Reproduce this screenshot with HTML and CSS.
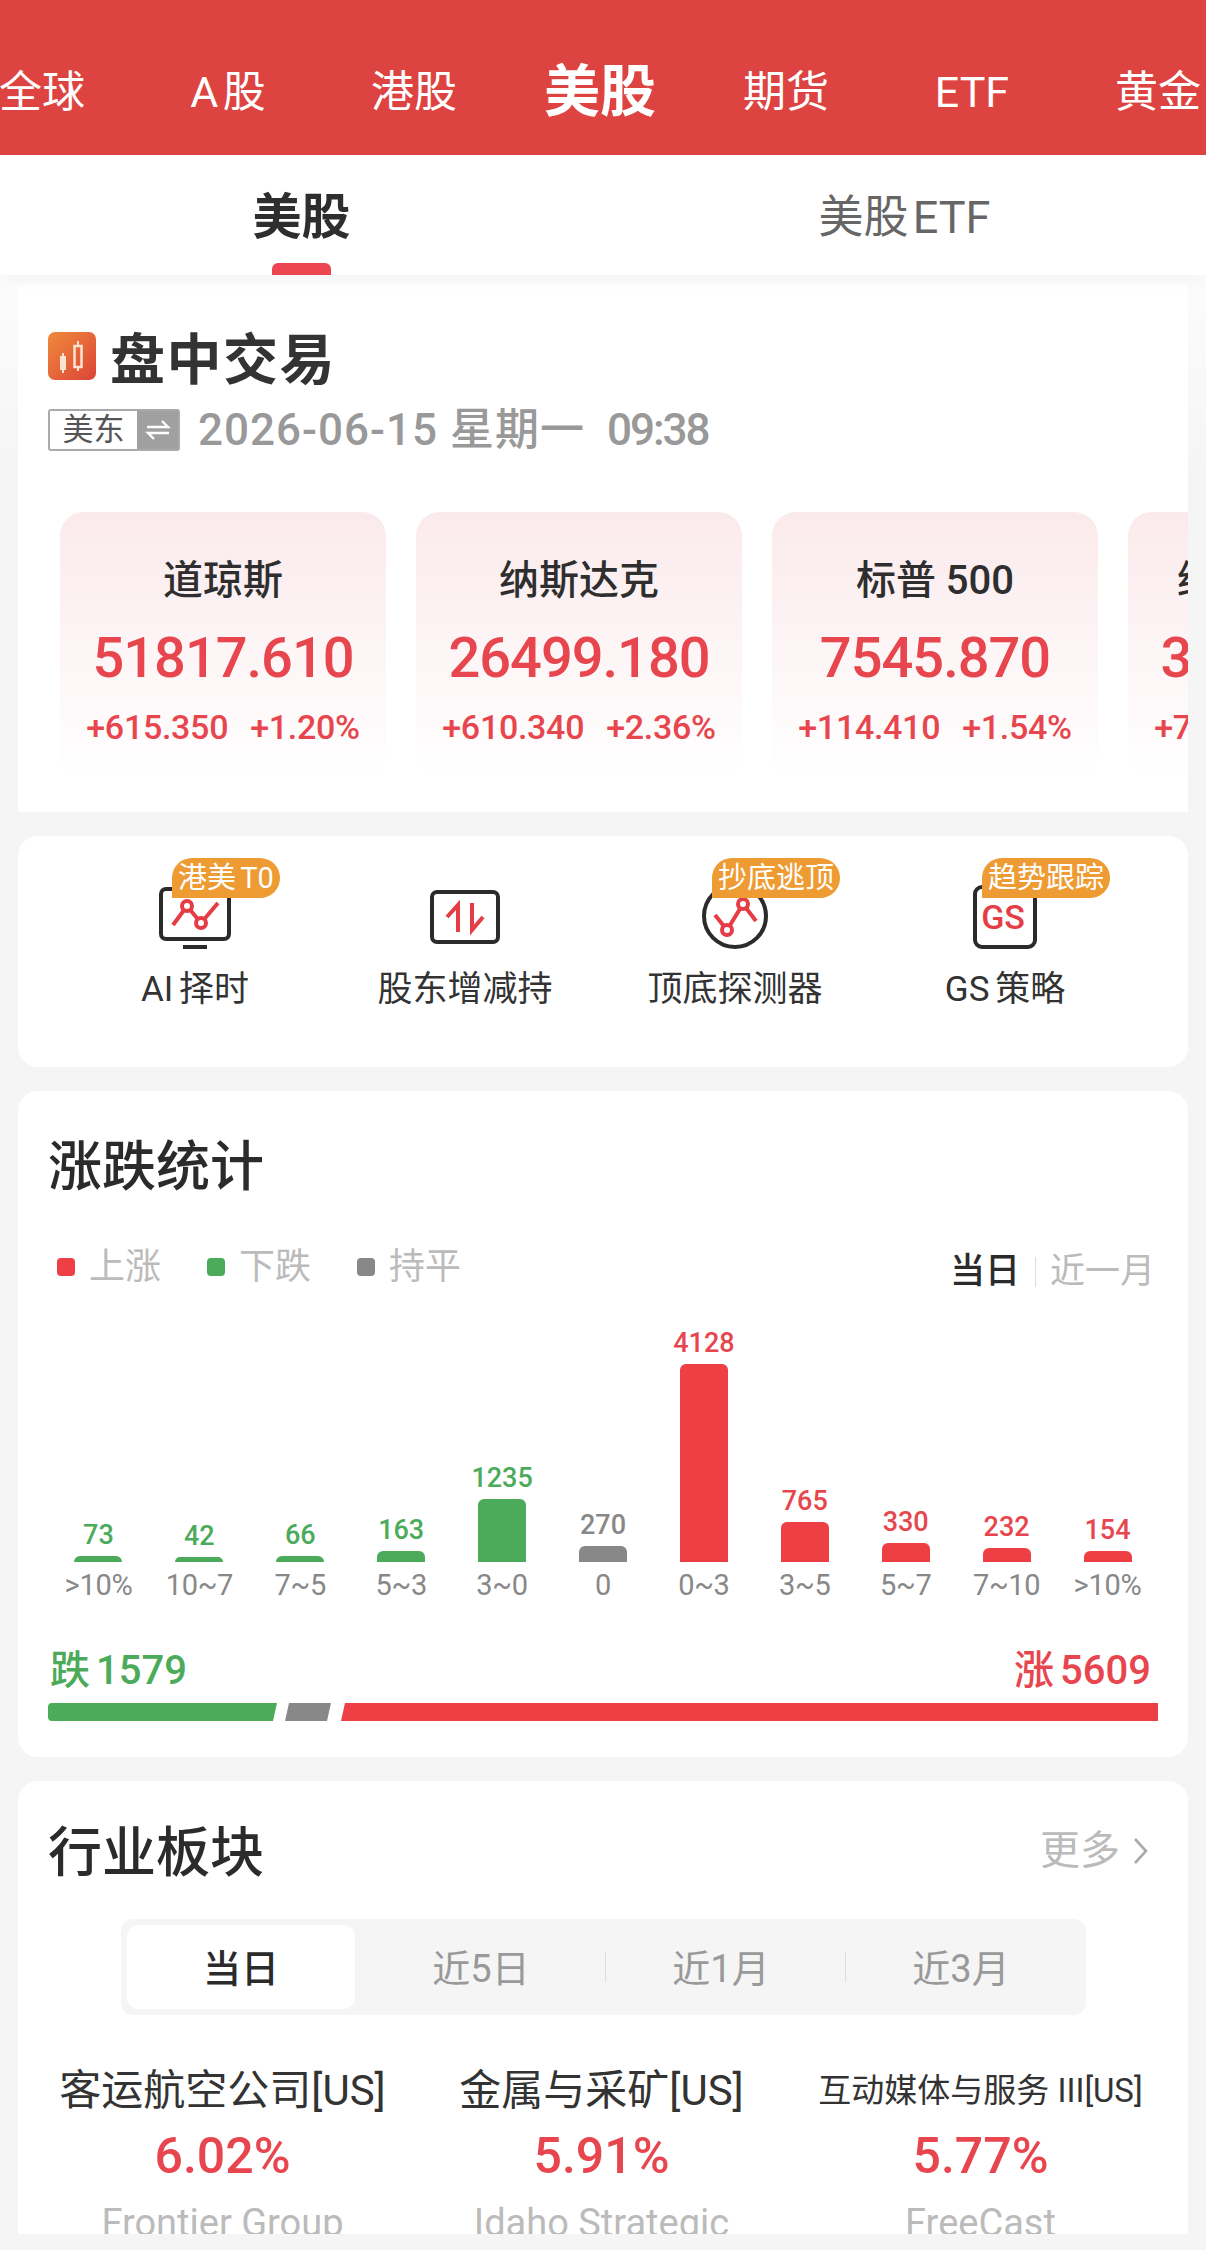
FILE: index.html
```html
<!DOCTYPE html>
<html lang="zh-CN">
<head>
    <meta charset="UTF-8">
    <meta name="viewport" content="width=device-width, initial-scale=1.0">
    <title>美股</title>
    <link rel="stylesheet" href="styles.css">
</head>
<body>

    <nav class="top-nav">
        <a>全球</a>
        <a>A 股</a>
        <a>港股</a>
        <a class="active">美股</a>
        <a>期货</a>
        <a>ETF</a>
        <a>黄金</a>
    </nav>

    <div class="sub-tabs">
        <a class="sub-tab active">美股</a>
        <a class="sub-tab">美股 ETF</a>
    </div>

    <main class="page">

        <!-- Session and index cards -->
        <section class="card session">
            <div class="session-title">
                <svg class="session-icon" viewBox="0 0 48 48">
                    <defs>
                        <linearGradient id="sessionGrad" x1="0" y1="0" x2="1" y2="1">
                            <stop offset="0" stop-color="#ef8a3c"/>
                            <stop offset="1" stop-color="#dc4438"/>
                        </linearGradient>
                    </defs>
                    <rect width="48" height="48" rx="7" fill="url(#sessionGrad)"/>
                    <path d="M15 21v3M15 38v3M30 9v4M30 35v4" stroke="#fbe3d2" stroke-width="2"/>
                    <rect x="12" y="24" width="6" height="14" fill="#fbe3d2"/>
                    <rect x="26.5" y="14" width="7" height="21" fill="none" stroke="#fbe3d2" stroke-width="2.5"/>
                </svg>
                <h2>盘中交易</h2>
            </div>
            <div class="session-date">
                <span class="zone">
                    <span class="zone-name">美东</span>
                    <span class="zone-switch">
                        <svg viewBox="0 0 26 22" width="26" height="22">
                            <path d="M2 8h21l-6-6M24 14H3l6 6" fill="none" stroke="#fff" stroke-width="2.4"/>
                        </svg>
                    </span>
                </span>
                <span class="date-text">2026-06-15 星期一</span>
                <span class="date-time">09:38</span>
            </div>
            <div class="index-strip">
                <div class="index-card">
                    <div class="index-name">道琼斯</div>
                    <div class="index-value">51817.610</div>
                    <div class="index-change"><span>+615.350</span><span>+1.20%</span></div>
                </div>
                <div class="index-card">
                    <div class="index-name">纳斯达克</div>
                    <div class="index-value">26499.180</div>
                    <div class="index-change"><span>+610.340</span><span>+2.36%</span></div>
                </div>
                <div class="index-card">
                    <div class="index-name">标普 500</div>
                    <div class="index-value">7545.870</div>
                    <div class="index-change"><span>+114.410</span><span>+1.54%</span></div>
                </div>
                <div class="index-card">
                    <div class="index-name">纳斯达克100</div>
                    <div class="index-value">30412.650</div>
                    <div class="index-change"><span>+720.350</span><span>+2.42%</span></div>
                </div>
            </div>
        </section>

        <!-- Tool shortcuts -->
        <section class="card menu">
            <div class="menu-item">
                <div class="menu-icon">
                    <svg viewBox="0 0 160 92" width="160" height="92">
                        <rect x="46" y="31" width="68" height="50" rx="5" class="ink"/>
                        <path d="M68 89h24" class="ink"/>
                        <path d="M58 67l14-19 14 17 17-20" class="pen"/>
                        <circle cx="72" cy="48" r="5" class="dot"/>
                        <circle cx="86" cy="65" r="5" class="dot"/>
                    </svg>
                    <span class="menu-badge">港美 T0</span>
                </div>
                <div class="menu-label">AI 择时</div>
            </div>
            <div class="menu-item">
                <div class="menu-icon">
                    <svg viewBox="0 0 160 92" width="160" height="92">
                        <rect x="47" y="34" width="66" height="50" rx="5" class="ink"/>
                        <path d="M62 59l11-12v27M98 59L87 72V45" class="pen"/>
                    </svg>
                </div>
                <div class="menu-label">股东增减持</div>
            </div>
            <div class="menu-item">
                <div class="menu-icon">
                    <svg viewBox="0 0 160 92" width="160" height="92">
                        <circle cx="80" cy="58" r="31" class="ink"/>
                        <path d="M60 57l12 15 16-26 13 17" class="pen"/>
                        <circle cx="72" cy="72" r="5" class="dot"/>
                        <circle cx="88" cy="46" r="5" class="dot"/>
                    </svg>
                    <span class="menu-badge">抄底逃顶</span>
                </div>
                <div class="menu-label">顶底探测器</div>
            </div>
            <div class="menu-item">
                <div class="menu-icon">
                    <svg viewBox="0 0 160 92" width="160" height="92">
                        <rect x="50" y="29" width="60" height="60" rx="7" class="ink"/>
                        <text x="78" y="71" text-anchor="middle" class="gs-text">GS</text>
                    </svg>
                    <span class="menu-badge">趋势跟踪</span>
                </div>
                <div class="menu-label">GS 策略</div>
            </div>
        </section>

        <!-- Rise and fall distribution -->
        <section class="card stats">
            <h2 class="card-title">涨跌统计</h2>
            <div class="stats-head">
                <div class="legend">
                    <span class="legend-item"><i class="bg-red"></i>上涨</span>
                    <span class="legend-item"><i class="bg-green"></i>下跌</span>
                    <span class="legend-item"><i class="bg-grey"></i>持平</span>
                </div>
                <div class="range">
                    <span class="range-on">当日</span>
                    <span class="range-off">近一月</span>
                </div>
            </div>
            <div class="chart">
                <div class="col green"><span class="num">73</span><i style="height:6px"></i></div>
                <div class="col green"><span class="num">42</span><i style="height:5px"></i></div>
                <div class="col green"><span class="num">66</span><i style="height:6px"></i></div>
                <div class="col green"><span class="num">163</span><i style="height:11px"></i></div>
                <div class="col green"><span class="num">1235</span><i style="height:63px"></i></div>
                <div class="col grey"><span class="num">270</span><i style="height:16px"></i></div>
                <div class="col red"><span class="num">4128</span><i style="height:198px"></i></div>
                <div class="col red"><span class="num">765</span><i style="height:40px"></i></div>
                <div class="col red"><span class="num">330</span><i style="height:19px"></i></div>
                <div class="col red"><span class="num">232</span><i style="height:14px"></i></div>
                <div class="col red"><span class="num">154</span><i style="height:11px"></i></div>
            </div>
            <div class="axis">
                <span>&gt;10%</span><span>10~7</span><span>7~5</span><span>5~3</span><span>3~0</span><span>0</span>
                <span>0~3</span><span>3~5</span><span>5~7</span><span>7~10</span><span>&gt;10%</span>
            </div>
            <div class="totals">
                <span class="total-down">跌 1579</span>
                <span class="total-up">涨 5609</span>
            </div>
            <div class="split">
                <span class="split-down" style="width:229px"></span>
                <span class="split-flat" style="width:46px"></span>
                <span class="split-up"></span>
            </div>
        </section>

        <!-- Sectors -->
        <section class="card sectors">
            <div class="sectors-head">
                <h2 class="card-title">行业板块</h2>
                <span class="more">更多
                    <svg viewBox="0 0 16 28" width="16" height="28">
                        <path d="M2 2l11 12L2 26" fill="none" stroke="#aaa" stroke-width="2.6"/>
                    </svg>
                </span>
            </div>
            <div class="segment">
                <span class="seg active">当日</span>
                <span class="seg">近5日</span>
                <span class="seg line">近1月</span>
                <span class="seg line">近3月</span>
            </div>
            <div class="sector-grid">
                <div class="sector">
                    <div class="sector-name">客运航空公司[US]</div>
                    <div class="sector-pct">6.02%</div>
                    <div class="sector-stock">Frontier Group</div>
                </div>
                <div class="sector">
                    <div class="sector-name">金属与采矿[US]</div>
                    <div class="sector-pct">5.91%</div>
                    <div class="sector-stock">Idaho Strategic</div>
                </div>
                <div class="sector">
                    <div class="sector-name small">互动媒体与服务 III[US]</div>
                    <div class="sector-pct">5.77%</div>
                    <div class="sector-stock">FreeCast</div>
                </div>
            </div>
        </section>

    </main>

</body>
</html>
```

FILE: styles.css
```css
* { box-sizing: border-box; }
body {
    margin: 0;
    width: 1206px;
    height: 2250px;
    overflow: hidden;
    background: #f5f5f5;
    color: #2e2e2e;
    font-family: Roboto, "Noto Sans CJK SC", sans-serif;
}
h2 { margin: 0; }

.top-nav { height: 155px; padding: 28px 6px 0 0; background: #dd4441; display: flex; justify-content: center; align-items: center; overflow: hidden; word-spacing: -6px; }
.top-nav a { flex: none; width: 186px; text-align: center; color: white; font-size: 43px; line-height: 60px; }
.top-nav a.active { font-size: 56px; font-weight: 700; }

.sub-tabs { position: relative; z-index: 1; height: 120px; background: white; display: flex; box-shadow: 0 6px 16px rgba(0,0,0,0.03); }
.sub-tab { position: relative; flex: 1; text-align: center; padding-top: 30px; font-size: 45px; line-height: 66px; color: #666; word-spacing: -7px; }
.sub-tab.active { font-size: 49px; font-weight: 700; color: #2e2e2e; }
.sub-tab.active::after { content: ""; position: absolute; left: 272px; bottom: 0; width: 59px; height: 12px; border-radius: 6px 6px 0 0; background: #ec4450; }

.page { padding: 10px 18px 0; display: flex; flex-direction: column; gap: 24px; background: linear-gradient(#fcfcfc, #f5f5f5 200px); }
.card { background: white; border-radius: 20px; }
.card-title { font-size: 54px; font-weight: 500; line-height: 60px; color: #2b2b2b; position: relative; top: 3px; }

/* session card */
.session { height: 527px; padding-top: 47px; border-radius: 0; }
.session-title { display: flex; align-items: center; gap: 14px; padding-left: 30px; height: 48px; }
.session-icon { width: 48px; height: 48px; }
.session-title h2 { font-size: 55px; font-weight: 700; letter-spacing: 1.5px; line-height: 60px; color: #333; position: relative; top: 4px; }
.session-date { display: flex; align-items: center; margin: 29px 0 0 30px; height: 42px; color: #999; font-size: 44px; font-weight: 500; }
.zone { display: flex; width: 132px; height: 42px; border: 2px solid #aaa; border-radius: 3px; font-weight: 400; }
.zone-name { width: 87px; text-align: center; font-size: 31px; line-height: 38px; color: #555; }
.zone-switch { flex: 1; background: #a0a0a0; display: flex; align-items: center; justify-content: center; }
.date-text { margin-left: 18px; letter-spacing: 1px; line-height: 36px; }
.date-time { margin-left: 22px; letter-spacing: -2px; line-height: 36px; }

.index-strip { display: flex; gap: 30px; margin-top: 61px; padding-left: 42px; overflow: hidden; }
.index-card { flex: none; width: 326px; height: 266px; border-radius: 24px; background: linear-gradient(#fbeaec, #fff); text-align: center; white-space: nowrap; }
.index-name { margin-top: 43px; font-size: 40px; font-weight: 500; line-height: 52px; }
.index-value { margin-top: 18px; font-size: 56px; font-weight: 500; letter-spacing: -1px; line-height: 66px; color: #e8464e; }
.index-change { margin-top: 16px; display: flex; justify-content: center; gap: 22px; font-size: 34px; font-weight: 500; letter-spacing: -0.3px; line-height: 40px; color: #e8464e; }

/* shortcut menu */
.menu { height: 231px; padding: 22px 0 0 42px; display: grid; grid-template-columns: repeat(4, 270px); align-content: start; }
.menu-item { display: flex; flex-direction: column; align-items: center; }
.menu-icon { position: relative; width: 160px; height: 92px; }
.menu-icon svg { display: block; }
.menu-badge { position: absolute; left: 57px; top: 0; height: 40px; padding: 0 6px; background: #ee9b33; border-radius: 20px 20px 20px 0; color: white; font-size: 29px; line-height: 40px; word-spacing: -3px; white-space: nowrap; }
.menu-label { margin-top: 17px; font-size: 35px; line-height: 46px; color: #333; word-spacing: -3px; }
.ink { fill: none; stroke: #2b2b2b; stroke-width: 4; }
.pen { fill: none; stroke: #e63c46; stroke-width: 4; }
.dot { fill: white; stroke: #e63c46; stroke-width: 4; }
.gs-text { font-family: Roboto, sans-serif; font-size: 34px; font-weight: 500; fill: #e63c46; }

/* rise and fall */
.stats { height: 666px; padding: 44px 30px 0; }
.stats-head { display: flex; justify-content: space-between; margin-top: 50px; height: 40px; }
.legend { display: flex; gap: 46px; padding: 4px 0 0 9px; }
.legend-item { display: flex; align-items: center; gap: 14px; font-size: 36px; line-height: 40px; color: #bbb; }
.legend-item i { width: 18px; height: 18px; border-radius: 4px; }
.bg-red { background: #ee4044; }
.bg-green { background: #4cab5a; }
.bg-grey { background: #888; }
.range { display: flex; align-items: center; padding-top: 14px; font-size: 35px; line-height: 40px; }
.range-on { font-weight: 500; color: #2b2b2b; padding-right: 15px; border-right: 1px solid #ddd; line-height: 30px; }
.range-off { padding-left: 14px; padding-right: 3px; color: #bbb; }

.chart { display: flex; align-items: flex-end; height: 277px; }
.col { flex: 1; display: flex; flex-direction: column; align-items: center; }
.col i { width: 48px; border-radius: 6px 6px 0 0; }
.num { font-size: 27px; font-weight: 500; line-height: 28px; margin-bottom: 7px; }
.col.green .num { color: #4cab5a; }
.col.green i { background: #4cab5a; }
.col.grey .num { color: #888; }
.col.grey i { background: #888; }
.col.red .num { color: #e8464e; }
.col.red i { background: #ee4044; }
.axis { display: flex; margin-top: 8px; color: #888; font-size: 29px; line-height: 30px; letter-spacing: -0.3px; }
.axis span { flex: 1; text-align: center; }

.totals { display: flex; justify-content: space-between; margin-top: 49px; padding: 0 7px 0 2px; font-size: 40px; font-weight: 500; line-height: 43px; word-spacing: -4px; }
.total-down { color: #4cab5a; }
.total-up { color: #e8464e; }
.split { display: flex; gap: 8px; height: 18px; margin-top: 11px; }
.split-down { background: #4cab5a; border-radius: 4px 0 0 4px; clip-path: polygon(0 0, 100% 0, calc(100% - 4px) 100%, 0 100%); }
.split-flat { background: #888; clip-path: polygon(4px 0, 100% 0, calc(100% - 4px) 100%, 0 100%); }
.split-up { flex: 1; margin-left: 2px; background: #ee4044; clip-path: polygon(4px 0, 100% 0, 100% 100%, 0 100%); }

/* sectors */
.sectors { height: 453px; padding: 40px 30px 0; overflow: hidden; border-radius: 20px 20px 0 0; }
.sectors-head { display: flex; justify-content: space-between; align-items: center; }
.more { display: flex; align-items: center; gap: 13px; padding-right: 9px; font-size: 40px; line-height: 48px; color: #bbb; }
.segment { display: grid; grid-template-columns: repeat(4, 240px); width: 965px; height: 96px; margin: 38px 0 0 73px; background: #f5f5f5; border-radius: 12px; }
.seg { position: relative; display: flex; align-items: center; justify-content: center; padding-bottom: 3px; font-size: 38px; color: #999; }
.seg.active { margin: 6px; background: white; border-radius: 12px; color: #2b2b2b; font-weight: 500; }
.seg.line::before { content: ""; position: absolute; left: 4px; top: 33px; width: 1px; height: 30px; background: #ddd; }
.sector-grid { display: grid; grid-template-columns: repeat(3, 379px); margin: 54px 0 0 -15px; text-align: center; }
.sector-name { font-size: 42px; line-height: 44px; color: #333; white-space: nowrap; }
.sector-name.small { font-size: 33px; }
.sector-pct { margin-top: 15px; font-size: 50px; font-weight: 500; line-height: 56px; color: #e8464e; }
.sector-stock { margin-top: 19px; font-size: 38px; line-height: 40px; color: #bbb; white-space: nowrap; }
```
